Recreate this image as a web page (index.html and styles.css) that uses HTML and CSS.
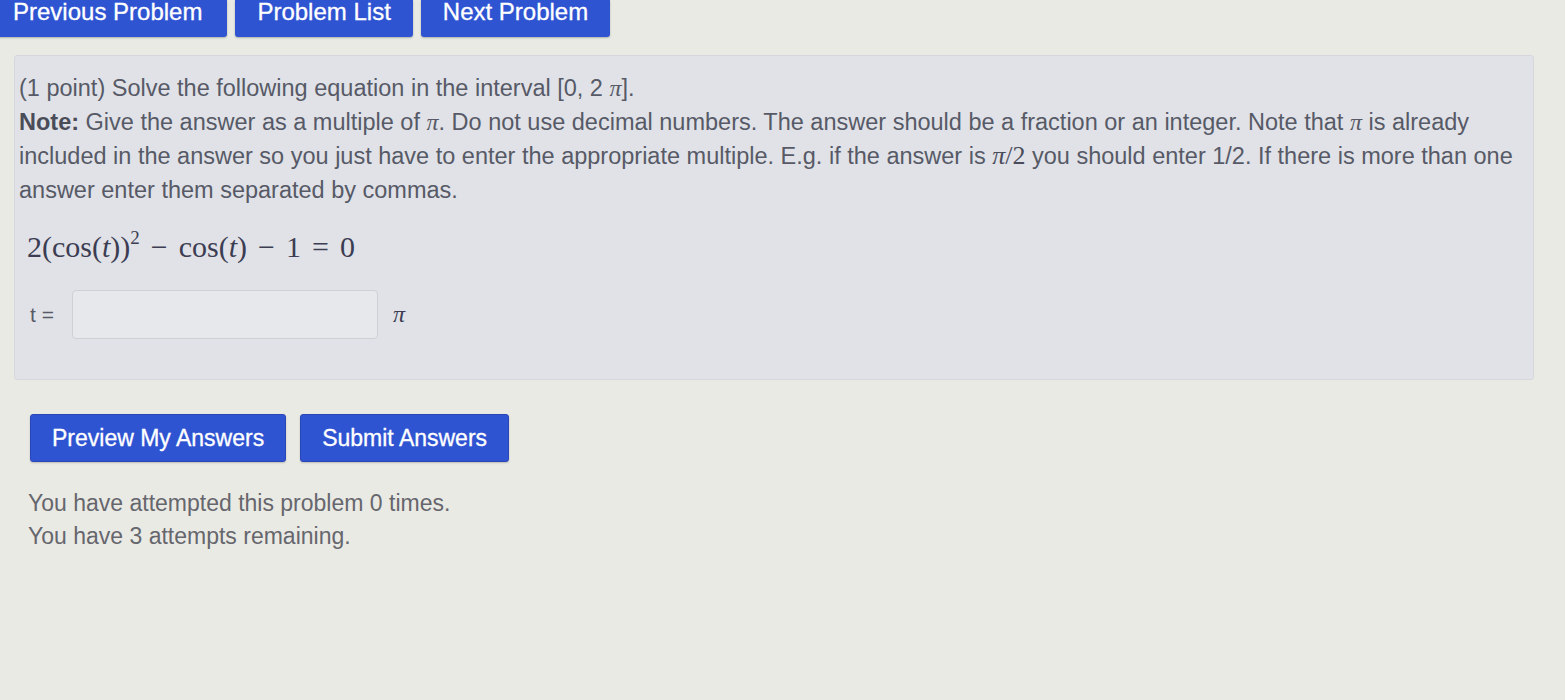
FILE: index.html
```html
<!DOCTYPE html>
<html>
<head>
<meta charset="utf-8">
<link rel="stylesheet" href="styles.css">
</head>
<body>
<div class="page">
  <nav class="nav">
    <a class="navbtn first">Previous Problem</a>
    <a class="navbtn">Problem List</a>
    <a class="navbtn">Next Problem</a>
  </nav>
  <div class="problem">
    <p class="text">(1 point) Solve the following equation in the interval [0, 2 <span class="mi">π</span>].<br>
    <b>Note:</b> Give the answer as a multiple of <span class="mi">π</span>. Do not use decimal numbers. The answer should be a fraction or an integer. Note that <span class="mi">π</span> is already<br>
    included in the answer so you just have to enter the appropriate multiple. E.g. if the answer is <span class="math"><i>π</i>/2</span> you should enter 1/2. If there is more than one<br>
    answer enter them separated by commas.</p>
    <div class="equation">2(cos(<i>t</i>))<sup>2</sup><span class="op">−</span>cos(<i>t</i>)<span class="op">−</span>1<span class="op">=</span>0</div>
    <div class="answer">
      <span class="label">t =</span>
      <span class="inputbox"></span>
      <span class="pi">π</span>
    </div>
  </div>
  <div class="actions">
    <button class="btn">Preview My Answers</button>
    <button class="btn">Submit Answers</button>
  </div>
  <div class="attempts">
    <div>You have attempted this problem 0 times.</div>
    <div>You have 3 attempts remaining.</div>
  </div>
</div>
</body>
</html>
```
FILE: styles.css
```css
html, body {
  margin: 0;
  padding: 0;
  background: #eaeae5;
}
body {
  font-family: "Liberation Sans", Arial, sans-serif;
  color: #575a66;
  width: 1565px;
  height: 700px;
  overflow: hidden;
}
.page {
  padding: 0 0 0 14px;
}
.nav {
  display: flex;
  gap: 8px;
  margin-left: -23px;
}
.navbtn {
  display: block;
  background: #2f54d2;
  color: #fff;
  font-size: 24px;
  line-height: 24px;
  height: 37px;
  box-sizing: border-box;
  padding: 0 22px;
  border-radius: 0 0 3px 3px;
  -webkit-text-stroke: 0.3px #fff;
  box-shadow: 0 1px 2px rgba(0,0,0,0.25);
}
.navbtn.first {
  padding-right: 25px;
}
.problem {
  margin-top: 18px;
  width: 1520px;
  box-sizing: border-box;
  background: #e0e2e8;
  border: 1px solid #d5d7dd;
  border-radius: 3px;
  padding: 15px 4px 40px 4px;
}
.text {
  margin: 0;
  font-size: 23.5px;
  line-height: 34px;
  white-space: nowrap;
}
.text b {
  color: #4a4c58;
}
.mi, .math {
  font-family: "Liberation Serif", "Times New Roman", serif;
  font-style: italic;
  font-size: 24px;
}
.math {
  font-style: normal;
  font-size: 26px;
  color: #4a4c5a;
}
.equation {
  margin-top: 23px;
  margin-left: 8px;
  font-family: "Liberation Serif", "Times New Roman", serif;
  font-size: 30px;
  line-height: 34px;
  color: #3c3d52;
}
.equation sup {
  font-size: 19px;
  vertical-align: 13px;
  line-height: 0;
}
.equation .op {
  padding: 0 11px;
}
.answer {
  display: flex;
  align-items: center;
  margin-top: 26px;
  margin-left: 11px;
}
.label {
  font-size: 21px;
  width: 42px;
}
.inputbox {
  display: block;
  width: 306px;
  height: 49px;
  box-sizing: border-box;
  background: #e7e8eb;
  border: 1px solid #cfd0d5;
  border-radius: 4px;
}
.pi {
  margin-left: 15px;
  font-family: "Liberation Serif", "Times New Roman", serif;
  font-style: italic;
  font-size: 24px;
  color: #3c3d52;
}
.actions {
  display: flex;
  gap: 14px;
  margin-top: 34px;
  margin-left: 16px;
}
.btn {
  background: #2f54d2;
  color: #fff;
  border: 1px solid #2a47b8;
  border-radius: 3px;
  font-family: "Liberation Sans", Arial, sans-serif;
  font-size: 23px;
  height: 48px;
  padding: 0 21px;
  -webkit-text-stroke: 0.3px #fff;
  box-shadow: 0 1px 2px rgba(0,0,0,0.2);
}
.attempts {
  margin-top: 25px;
  margin-left: 14px;
  font-size: 23px;
  line-height: 33px;
  color: #66666d;
}
```
